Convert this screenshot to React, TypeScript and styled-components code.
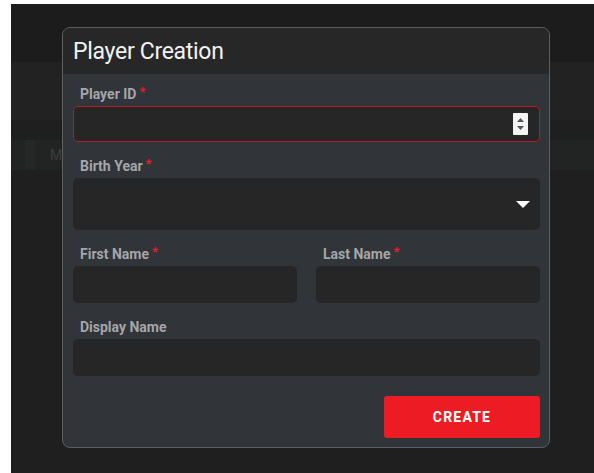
import React from "react";
import styled, { createGlobalStyle } from "styled-components";

const GlobalStyle = createGlobalStyle`
  html, body {
    margin: 0;
    padding: 0;
    background: #ffffff;
  }
  body {
    font-family: Roboto, "Liberation Sans", sans-serif;
  }
  * { box-sizing: border-box; }
`;

const Page = styled.div`
  position: relative;
  margin: 4px 0 0 11px;
  height: 469px;
  background: #1e1e1e;
  overflow: hidden;
  display: flex;
  flex-direction: column;
`;

const TopBar = styled.div`
  height: 58px;
  background: #1c1c1c;
`;

const Toolbar = styled.div`
  height: 58px;
  background: #222222;
`;

const ListArea = styled.div`
  flex: 1;
  padding-top: 20px;
  background: #1f1f1f;
`;

const ListRow = styled.div`
  height: 30px;
  display: flex;
  align-items: center;
  gap: 15px;
  padding-left: 14px;
  background: #222323;
`;

const RowThumb = styled.div`
  width: 10px;
  height: 30px;
  background: #262727;
`;

const RowText = styled.span`
  font-size: 14px;
  color: #3d3e40;
`;

const Dialog = styled.div`
  position: absolute;
  left: 51px;
  top: 23px;
  width: 488px;
  display: flex;
  flex-direction: column;
  background: #313439;
  border: 1px solid #5d5e60;
  border-radius: 8px;
  overflow: hidden;
`;

const DialogHeader = styled.div`
  height: 46px;
  display: flex;
  align-items: center;
  padding-left: 10px;
  background: #272727;
`;

const Title = styled.h1`
  margin: 0;
  font-size: 23px;
  font-weight: 400;
  letter-spacing: -0.3px;
  color: #f2f2f2;
`;

const Form = styled.form`
  display: flex;
  flex-direction: column;
  gap: 14px;
  padding: 10px 9px 9px 10px;
`;

const Field = styled.div`
  display: flex;
  flex-direction: column;
  gap: 2px;
`;

const FieldRow = styled.div`
  display: grid;
  grid-template-columns: 1fr 1fr;
  column-gap: 19px;
`;

const Label = styled.label`
  height: 20px;
  line-height: 20px;
  padding-left: 7px;
  font-size: 14px;
  font-weight: 700;
  color: #a4a6a9;
`;

const Required = styled.span`
  margin-left: 3px;
  font-size: 13px;
  color: #ee1c24;
  vertical-align: top;
  line-height: 16px;
`;

const InputBox = styled.div<{ $height: number; $invalid?: boolean }>`
  position: relative;
  height: ${(p) => p.$height}px;
  display: flex;
  align-items: center;
  justify-content: flex-end;
  padding-right: 10px;
  background: #262626;
  border: ${(p) => (p.$invalid ? "1px solid #b71c24" : "none")};
  border-radius: 5px;
`;

const TextInput = styled.input`
  position: absolute;
  inset: 0;
  width: 100%;
  height: 100%;
  padding: 0 10px;
  background: transparent;
  border: none;
  outline: none;
  color: #e0e0e0;
  font: inherit;
`;

const Spinner = styled.div`
  position: relative;
  width: 15px;
  height: 22px;
  margin-right: 1px;
  display: flex;
  align-items: center;
  justify-content: center;
  background: #f4f4f4;
  border-radius: 1px;
`;

const Caret = styled.div`
  width: 14px;
  height: 7px;
  display: flex;
`;

const Actions = styled.div`
  display: flex;
  justify-content: flex-end;
  margin-top: 6px;
`;

const CreateButton = styled.button`
  width: 156px;
  height: 42px;
  border: none;
  border-radius: 3px;
  background: #ed1c24;
  color: #ffffff;
  font-family: Roboto, "Liberation Sans", sans-serif;
  font-size: 14px;
  font-weight: 700;
  letter-spacing: 1.2px;
  cursor: pointer;
`;

function FieldLabel({ text, required }: { text: string; required?: boolean }) {
  return (
    <Label>
      {text}
      {required && <Required>*</Required>}
    </Label>
  );
}

export default function App() {
  return (
    <>
      <GlobalStyle />
      <Page>
        <TopBar />
        <Toolbar />
        <ListArea>
          <ListRow>
            <RowThumb />
            <RowText>M</RowText>
          </ListRow>
        </ListArea>

        <Dialog role="dialog">
          <DialogHeader>
            <Title>Player Creation</Title>
          </DialogHeader>
          <Form onSubmit={(e) => e.preventDefault()}>
            <Field>
              <FieldLabel text="Player ID" required />
              <InputBox $height={36} $invalid>
                <TextInput />
                <Spinner>
                  <svg width="9" height="16" viewBox="0 0 9 16">
                    <path d="M4.5 2 L8 6 L1 6 Z" fill="#555" />
                    <path d="M1 10 L8 10 L4.5 14 Z" fill="#555" />
                  </svg>
                </Spinner>
              </InputBox>
            </Field>
            <Field>
              <FieldLabel text="Birth Year" required />
              <InputBox $height={52}>
                <Caret>
                  <svg width="14" height="7" viewBox="0 0 14 7">
                    <path d="M0 0 L14 0 L7 7 Z" fill="#ffffff" />
                  </svg>
                </Caret>
              </InputBox>
            </Field>
            <FieldRow>
              <Field>
                <FieldLabel text="First Name" required />
                <InputBox $height={37}>
                  <TextInput />
                </InputBox>
              </Field>
              <Field>
                <FieldLabel text="Last Name" required />
                <InputBox $height={37}>
                  <TextInput />
                </InputBox>
              </Field>
            </FieldRow>
            <Field>
              <FieldLabel text="Display Name" />
              <InputBox $height={37}>
                <TextInput />
              </InputBox>
            </Field>
            <Actions>
              <CreateButton type="submit">CREATE</CreateButton>
            </Actions>
          </Form>
        </Dialog>
      </Page>
    </>
  );
}
